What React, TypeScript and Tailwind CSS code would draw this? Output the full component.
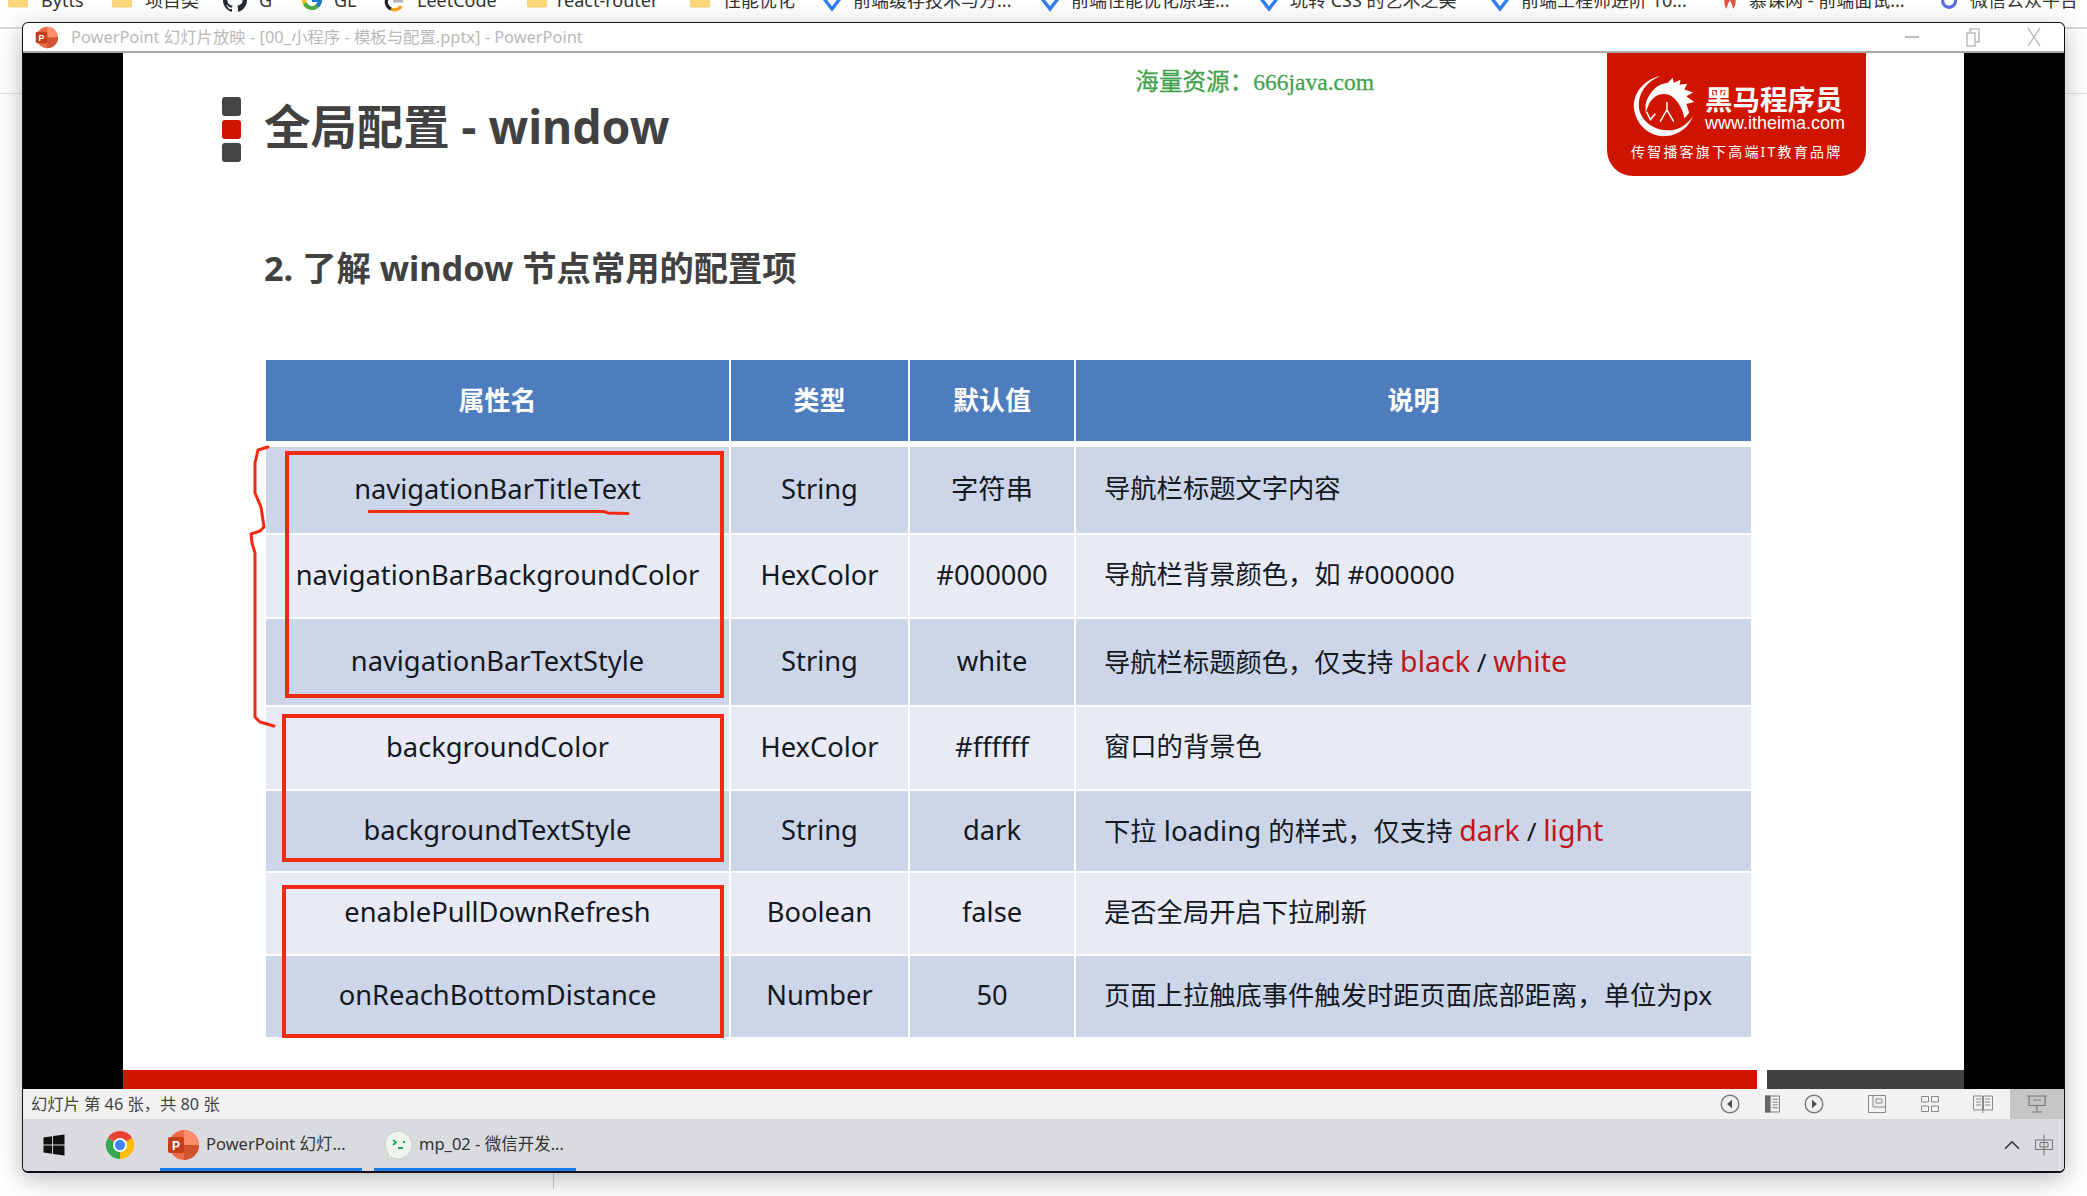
import { FaFolder, FaWindows } from "react-icons/fa";
import { FcGoogle } from "react-icons/fc";
import { SiGithub } from "react-icons/si";
import { ChevronUp } from "lucide-react";

const Diamond = ({ color = "#2f80ed" }: { color?: string }) => (
  <svg viewBox="0 0 24 24" className="w-[24px] h-[24px] shrink-0">
    <path d="M2 8 L12 21 L22 8 L12 2" fill="none" stroke={color} strokeWidth="3.4" />
  </svg>
);

const Flame = () => (
  <svg viewBox="0 0 20 24" className="w-[18px] h-[24px] shrink-0">
    <path d="M10 1 C17 6 18 14 14 22 C12 18 11 14 10 12 C8 15 7 19 6 22 C2 16 3 7 10 1Z" fill="#e5533d" />
  </svg>
);

const Tiktok = () => (
  <svg viewBox="0 0 24 24" className="w-[22px] h-[24px] shrink-0">
    <circle cx="11" cy="13" r="7" fill="none" stroke="#5b6be0" strokeWidth="3.4" />
    <path d="M18 2 V13" stroke="#5b6be0" strokeWidth="3.4" />
  </svg>
);

const LeetIcon = () => (
  <svg viewBox="0 0 24 24" className="w-[22px] h-[24px] shrink-0">
    <path d="M14 1 L5 10" stroke="#222" strokeWidth="3.4" fill="none" />
    <path d="M5 10 C2 14 4 20 9 22" stroke="#222" strokeWidth="3.4" fill="none" />
    <path d="M9 22 C13 24 17 22 20 19" stroke="#f89f1b" strokeWidth="3.4" fill="none" />
    <path d="M11 13 H22" stroke="#b3b3b3" strokeWidth="3.4" />
  </svg>
);

const folder = <FaFolder className="w-[20px] h-[24px] text-[#fbd67a] shrink-0" />;

const bookmarks = [
  { w: "w-[104px]", icon: folder, gap: "gap-[13px]", label: "Bytts" },
  { w: "w-[111px]", icon: folder, gap: "gap-[13px]", label: "项目类" },
  { w: "w-[77px]", icon: <SiGithub className="w-[24px] h-[24px] text-[#24292e] shrink-0" />, gap: "gap-[12px]", label: "G" },
  { w: "w-[83px]", icon: <FcGoogle className="w-[24px] h-[24px] shrink-0" />, gap: "gap-[10px]", label: "GL" },
  { w: "w-[144px]", icon: <LeetIcon />, gap: "gap-[12px]", label: "LeetCode" },
  { w: "w-[163px]", icon: folder, gap: "gap-[10px]", label: "react-router" },
  { w: "w-[130px]", icon: folder, gap: "gap-[13px]", label: "性能优化" },
  { w: "w-[218px]", icon: <Diamond />, gap: "gap-[9px]", label: "前端缓存技术与方..." },
  { w: "w-[219px]", icon: <Diamond />, gap: "gap-[9px]", label: "前端性能优化原理..." },
  { w: "w-[231px]", icon: <Diamond />, gap: "gap-[9px]", label: "玩转 CSS 的艺术之美" },
  { w: "w-[233px]", icon: <Diamond />, gap: "gap-[9px]", label: "前端工程师进阶 10..." },
  { w: "w-[218px]", icon: <Flame />, gap: "gap-[10px]", label: "慕课网 - 前端面试..." },
  { w: "w-[160px]", icon: <Tiktok />, gap: "gap-[9px]", label: "微信公众平台" },
];

const Red = ({ children }: { children: string }) => <span className="text-[#c0161a] text-[28.500px]">{children}</span>;

const rows = [
  { h: "h-[86px]", bg: "bg-[#cdd6e8]", name: "navigationBarTitleText", type: "String", def: "字符串", desc: <>导航栏标题文字内容</> },
  { h: "h-[82px]", bg: "bg-[#e8ebf5]", name: "navigationBarBackgroundColor", type: "HexColor", def: "#000000", desc: <>导航栏背景颜色，如 #000000</> },
  {
    h: "h-[86px]",
    bg: "bg-[#cdd6e8]",
    name: "navigationBarTextStyle",
    type: "String",
    def: "white",
    desc: (
      <>
        导航栏标题颜色，仅支持 <Red>black</Red> / <Red>white</Red>
      </>
    ),
  },
  { h: "h-[82px]", bg: "bg-[#e8ebf5]", name: "backgroundColor", type: "HexColor", def: "#ffffff", desc: <>窗口的背景色</> },
  {
    h: "h-[80px]",
    bg: "bg-[#cdd6e8]",
    name: "backgroundTextStyle",
    type: "String",
    def: "dark",
    desc: (
      <>
        下拉<span className="text-[27.600px]"> loading </span>的样式，仅支持 <Red>dark</Red> / <Red>light</Red>
      </>
    ),
  },
  { h: "h-[81px]", bg: "bg-[#e8ebf5]", name: "enablePullDownRefresh", type: "Boolean", def: "false", desc: <>是否全局开启下拉刷新</> },
  { h: "h-[81px]", bg: "bg-[#cdd6e8]", name: "onReachBottomDistance", type: "Number", def: "50", desc: <>页面上拉触底事件触发时距页面底部距离，单位为px</> },
];

const PptIcon = ({ size }: { size: string }) => (
  <svg viewBox="0 0 32 32" className={size}>
    <circle cx="17" cy="16" r="15" fill="#ed6c47" />
    <path d="M17 1 A15 15 0 0 1 32 16 H17Z" fill="#ff8f6b" />
    <path d="M17 16 H32 A15 15 0 0 1 17 31Z" fill="#d35230" />
    <rect x="1" y="8" width="16" height="16" rx="2" fill="#c43e1c" />
    <text x="9" y="21" textAnchor="middle" fontSize="12" fontWeight="700" fill="#fff" fontFamily="Liberation Sans">P</text>
  </svg>
);

const ChromeIcon = () => (
  <svg viewBox="0 0 32 32" className="w-[30px] h-[36px]">
    <path d="M16 16 L3 8.5 A15 15 0 0 1 29 8.5Z" fill="#ea4335" />
    <path d="M16 16 L29 8.5 A15 15 0 0 1 16 31Z" fill="#fbbc04" />
    <path d="M16 16 L16 31 A15 15 0 0 1 3 8.5Z" fill="#34a853" />
    <circle cx="16" cy="16" r="7.5" fill="#fff" />
    <circle cx="16" cy="16" r="5.5" fill="#4285f4" />
  </svg>
);

const WechatDevIcon = () => (
  <svg viewBox="0 0 32 32" className="w-[32px] h-[36px]">
    <path d="M16 2 A14 14 0 1 1 9 28 L6 31 L6.500 25 A14 14 0 0 1 16 2Z" fill="#eef3ee" stroke="#c9cdca" strokeWidth="1" />
    <path d="M11 11 L14 13.500 L11 16" fill="none" stroke="#1fa85a" strokeWidth="1.800" />
    <path d="M16 19 H21" stroke="#1fa85a" strokeWidth="2" />
    <circle cx="22" cy="13" r="1.200" fill="#1fa85a" />
  </svg>
);

const HorseLogo = () => (
  <svg viewBox="0 0 68 68" className="w-[66px] h-[66px] shrink-0">
    <path d="M30 3 C12 7 2 22 3 36 C5 54 20 66 36 65 C50 64 60 55 64 44 C58 54 47 60 36 59 C20 58 8 46 8 33 C8 20 16 9 30 3Z" fill="#fff" />
    <path d="M15 32 C19 18 28 11 38 10 L43 5 L44 10 L51 7 L50 12 L58 11 L55 17 L64 20 L57 24 L65 30 L57 32 L60 41 L55 47 C54 40 50 30 42 24 C34 19 24 22 19 31 L15 41Z" fill="#fff" />
    <path d="M16 40 L20 48 L25 42 M37 30 L37 38 M37 38 L30 50 M37 38 L44 50" stroke="#fff" strokeWidth="1.500" fill="none" />
  </svg>
);

const CircleNav = ({ flip }: { flip?: boolean }) => (
  <svg viewBox="0 0 20 20" className="w-[20px] h-[20px]">
    <circle cx="10" cy="10" r="8.800" fill="none" stroke="#777" strokeWidth="1.400" />
    <path d={flip ? "M8 5.500 L13 10 L8 14.500Z" : "M12 5.500 L7 10 L12 14.500Z"} fill="#555" />
  </svg>
);

const App = () => {
  return (
    <div className="relative w-[2087px] h-[1196px] overflow-hidden bg-white font-['Noto_Sans','Noto_Sans_CJK_SC',sans-serif]">
      {/* browser bookmarks, cut off by the top of the capture */}
      <div className="h-[22px] overflow-hidden">
        <div className="flex items-center h-[24px] -mt-[12px] pl-[8px] text-[18px] text-[#333] whitespace-nowrap">
          {bookmarks.map((b) => (
            <div key={b.label} className={`flex items-center shrink-0 ${b.w} ${b.gap}`}>
              {b.icon}
              <span>{b.label}</span>
            </div>
          ))}
        </div>
      </div>

      <div className="flex items-start">
        <div className="w-[22px] shrink-0">
          <div className="mt-[5px] border-t-2 border-[#d8d8d8]" />
          <div className="mt-[64px] border-t border-[#e2e2e2]" />
        </div>

        {/* PowerPoint window */}
        <div className="relative z-10 w-[2043px] h-[1151px] shrink-0 flex flex-col overflow-hidden rounded-[6px] border border-b-2 border-[#10101c] bg-white shadow-[0_6px_26px_rgba(0,0,0,0.28)]">
          <div className="h-[30px] shrink-0 flex items-center border-b-2 border-[#a8a8a8] pl-[12px]">
            <PptIcon size="w-[23px] h-[23px]" />
            <span className="ml-[13px] text-[16.4px] text-[#b9b9b9]">PowerPoint 幻灯片放映 - [00_小程序 - 模板与配置.pptx] - PowerPoint</span>
            <div className="ml-auto flex items-center text-[#b5b5b5]">
              <div className="w-[14px] h-[2px] bg-[#bdbdbd]" />
              <svg viewBox="0 0 14 20" className="ml-[47px] w-[14px] h-[20px]">
                <path d="M1 6 H9 V19 H1Z M4 6 V2 H13 V15 H9" fill="none" stroke="#bdbdbd" strokeWidth="1.500" />
              </svg>
              <svg viewBox="0 0 14 20" className="ml-[47px] mr-[23px] w-[14px] h-[20px]">
                <path d="M1 1 L13 19 M13 1 L1 19" stroke="#bdbdbd" strokeWidth="1.400" />
              </svg>
            </div>
          </div>

          <div className="flex h-[1036px] shrink-0 bg-black">
            <div className="w-[100px] shrink-0" />
            <div className="relative w-[1841px] shrink-0 bg-white flex flex-col">
              <div className="flex items-start h-[123px] pl-[99px] pr-[98px]">
                <div className="mt-[44px] flex flex-col gap-[4px] w-[19px] shrink-0">
                  <div className="h-[19px] rounded-[3px] bg-[#444]" />
                  <div className="h-[19px] rounded-[3px] bg-[#cf1500]" />
                  <div className="h-[19px] rounded-[3px] bg-[#444]" />
                </div>
                <h1 className="ml-[23px] mt-[43px] text-[46.400px] leading-[60px] font-bold text-[#414141] whitespace-nowrap">全局配置 - window</h1>
                <div className="ml-auto mr-[233px] mt-[13px] leading-[32px] text-[#3fa34d] whitespace-nowrap font-['Liberation_Serif','Noto_Sans_CJK_SC',serif] [-webkit-text-stroke:0.3px_#3fa34d]">
                  <span className="text-[23.600px]">海量资源：</span>
                  <span className="text-[23.500px]">666java.com</span>
                </div>
                <div className="w-[259px] h-[123px] shrink-0 rounded-b-[26px] bg-[#cf1500] text-white pl-[24px] pt-[20px]">
                  <div className="flex items-center gap-[8px]">
                    <HorseLogo />
                    <div className="w-[140px] mt-[8px]">
                      <div className="text-[27.500px] leading-[26px] font-bold whitespace-nowrap">黑马程序员</div>
                      <div className="text-[18px] leading-[20px] whitespace-nowrap font-['Liberation_Sans',sans-serif]">www.itheima.com</div>
                    </div>
                  </div>
                  <div className="mt-[3px] text-[14px] leading-[20px] tracking-[2.2px] whitespace-nowrap">传智播客旗下高端IT教育品牌</div>
                </div>
              </div>

              <h2 className="ml-[141px] mt-[72px] text-[34.300px] leading-[40px] font-bold text-[#414141] whitespace-nowrap">2. 了解 window 节点常用的配置项</h2>

              <div className="ml-[143px] mt-[72px] w-[1485px] flex flex-col text-[27.300px] text-[#14181f]">
                <div className="grid grid-cols-[463px_177px_164px_675px] gap-x-[2px] h-[81px] mb-[6px] text-[26px] font-bold text-white">
                  <div className="flex items-center justify-center bg-[#4d7dbf]">属性名</div>
                  <div className="flex items-center justify-center bg-[#4d7dbf]">类型</div>
                  <div className="flex items-center justify-center bg-[#4d7dbf]">默认值</div>
                  <div className="flex items-center justify-center bg-[#4d7dbf]">说明</div>
                </div>
                <div className="flex flex-col gap-[2px]">
                  {rows.map((r) => (
                    <div key={r.name} className={`grid grid-cols-[463px_177px_164px_675px] gap-x-[2px] ${r.h}`}>
                      <div className={`flex items-center justify-center pb-[2px] ${r.bg}`}>{r.name}</div>
                      <div className={`flex items-center justify-center pb-[2px] ${r.bg}`}>{r.type}</div>
                      <div className={`flex items-center justify-center pb-[2px] ${r.bg}`}>{r.def}</div>
                      <div className={`flex items-center pl-[28px] pb-[2px] text-[26.300px] whitespace-pre-wrap ${r.bg}`}>
                        <span>{r.desc}</span>
                      </div>
                    </div>
                  ))}
                </div>
              </div>

              <div className="mt-[33px] flex h-[19px]">
                <div className="w-[1634px] bg-[#cf1500]" />
                <div className="ml-[10px] flex-1 bg-[#414141]" />
              </div>

              {/* hand-drawn annotations over the slide */}
              <div className="absolute left-[162px] top-[398px] w-[439px] h-[247px] border-[4px] border-[#f22a12]" />
              <div className="absolute left-[159px] top-[661px] w-[442px] h-[148px] border-[4px] border-[#f22a12]" />
              <div className="absolute left-[159px] top-[832px] w-[442px] h-[153px] border-[4px] border-[#f22a12]" />
              <svg viewBox="0 0 262 8" className="absolute left-[245px] top-[456px] w-[262px] h-[8px]">
                <path d="M1 2.500 L236 2.500 L240 4 L260 4.500" fill="none" stroke="#f22a12" strokeWidth="3" strokeLinecap="round" />
              </svg>
              <svg viewBox="0 0 40 295" className="absolute left-[117px] top-[387px] w-[40px] h-[295px]">
                <path
                  d="M28 7 L18 10 L15 23 L15 53 L21 67 L24 87 L20 91 L11 94 L12 103 L15 113 L15 277 L20 282 L34 286"
                  fill="none"
                  stroke="#f22a12"
                  strokeWidth="3"
                  strokeLinejoin="round"
                  strokeLinecap="round"
                />
              </svg>
            </div>
            <div className="flex-1" />
          </div>

          <div className="h-[30px] shrink-0 flex items-center bg-[#f2f2f3] pl-[8px] text-[16.300px] text-[#444]">
            <span>幻灯片 第 46 张，共 80 张</span>
            <div className="ml-auto flex items-center h-full">
              <CircleNav />
              <svg viewBox="0 0 16 18" className="ml-[25px] w-[15px] h-[18px]">
                <rect x="0.500" y="0.500" width="15" height="17" fill="none" stroke="#777" />
                <rect x="0" y="0" width="6" height="18" fill="#666" />
                <path d="M8 4 H14 M8 7 H14 M8 10 H14 M8 13 H14" stroke="#777" />
              </svg>
              <div className="ml-[24px]">
                <CircleNav flip />
              </div>
              <svg viewBox="0 0 18 18" className="ml-[44px] w-[18px] h-[18px]">
                <path d="M0.500 0.500 H17.500 V17.500 H0.500Z M5 0.500 V12 H17.500 M8 4 H14 V8 H8Z" fill="none" stroke="#888" />
              </svg>
              <svg viewBox="0 0 18 18" className="ml-[35px] w-[18px] h-[18px]">
                <path d="M0.500 1.500 H7.500 V7 H0.500Z M10.500 1.500 H17.500 V7 H10.500Z M0.500 11 H7.500 V16.500 H0.500Z M10.500 11 H17.500 V16.500 H10.500Z" fill="none" stroke="#888" />
              </svg>
              <svg viewBox="0 0 20 18" className="ml-[34px] w-[20px] h-[18px]">
                <path d="M0.500 1 H9.500 V15 H0.500Z M10.500 1 H19.500 V15 H10.500Z M10 15 V18 M3 4 H8 M3 7 H8 M3 10 H8 M12 4 H17 M12 7 H17 M12 10 H17" fill="none" stroke="#888" />
              </svg>
              <div className="ml-[17px] w-[54px] h-full bg-[#c6c6c6] flex items-center justify-center">
                <svg viewBox="0 0 20 18" className="w-[20px] h-[18px]">
                  <path d="M0 1 H20 M2 1.500 V10.500 H18 V1.500 M10 10.500 V16 M5 17 H15 M6 5 H14" fill="none" stroke="#777" strokeWidth="1.200" />
                </svg>
              </div>
            </div>
          </div>

          <div className="relative flex-1 flex items-center bg-[#dadbdf] text-[16.500px] text-[#333]">
            <FaWindows className="ml-[20px] w-[22px] h-[24px] text-[#111] shrink-0" />
            <div className="ml-[40px]">
              <ChromeIcon />
            </div>
            <div className="ml-[25px] w-[202px] h-full flex items-center border-b-[3px] border-[#1a7ee0] pl-[7px] pt-[2px] gap-[7px]">
              <PptIcon size="w-[32px] h-[34px]" />
              <span className="whitespace-nowrap">PowerPoint 幻灯...</span>
            </div>
            <div className="ml-[12px] w-[202px] h-full flex items-center border-b-[3px] border-[#1a7ee0] pl-[8px] pt-[2px] gap-[5px]">
              <WechatDevIcon />
              <span className="whitespace-nowrap">mp_02 - 微信开发...</span>
            </div>
            <div className="ml-auto mr-[4px] flex items-center h-full gap-[10px] border-r border-[#eceded] pr-[6px]">
              <ChevronUp className="w-[26px] h-[26px] text-[#333]" strokeWidth={1.5} />
              <svg viewBox="0 0 18 22" className="w-[18px] h-[22px]">
                <path d="M0.500 6 H17.500 V15.500 H0.500Z M5 8.500 H13 V13 H5Z M9 0.500 V21.500" fill="none" stroke="#777" />
              </svg>
            </div>
          </div>
        </div>

        <div className="flex-1">
          <div className="mt-[5px] border-t-2 border-[#d8d8d8]" />
          <div className="mt-[64px] border-t border-[#e2e2e2]" />
        </div>
      </div>

      <div className="ml-[553px] w-[1px] h-[16px] bg-[#c9ced6]" />
    </div>
  );
};

export default App;
